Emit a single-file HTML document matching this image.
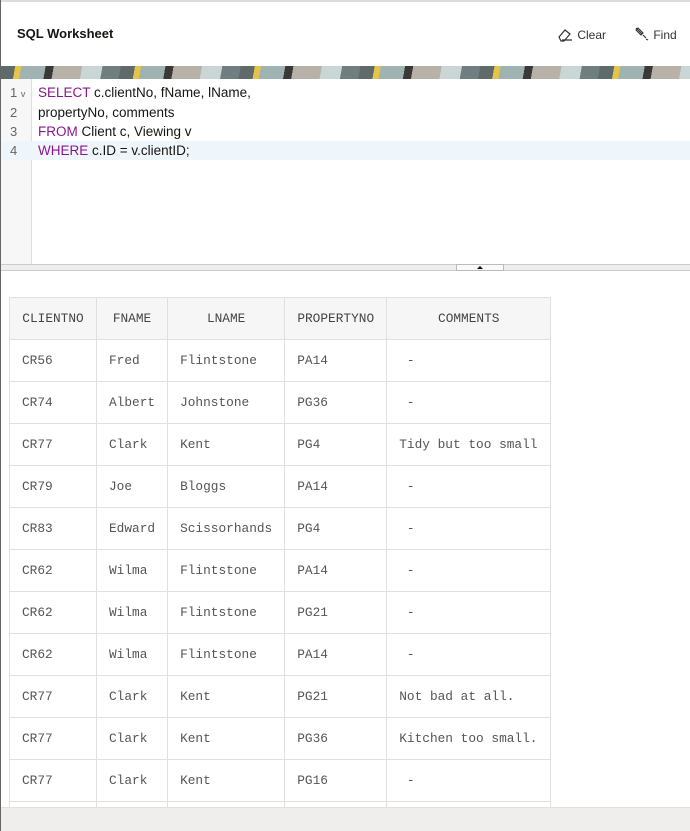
<!DOCTYPE html>
<html style="overflow:hidden;height:831px"><head><style>
*{margin:0;padding:0;box-sizing:border-box}
body{width:690px;height:831px;overflow:hidden;background:#fff;position:relative;font-family:"Liberation Sans",sans-serif}
.wrap{position:absolute;left:0;top:0;width:690px;height:831px;overflow:hidden}
.lb{position:absolute;left:0;top:0;width:1px;height:831px;background:#666}
.tb{position:absolute;left:0;top:0;width:690px;height:2px;background:#ddd}
.title{position:absolute;left:17px;top:26px;font-size:13px;font-weight:bold;color:#161513}
.btn{position:absolute;top:27px;font-size:12px;color:#333}
.banner{position:absolute;left:1px;top:66px;width:689px;height:13px;
background:repeating-linear-gradient(100deg,#5f6b6b 0 14px,#e8c34a 14px 20px,#9fb3b3 20px 44px,#3b3937 44px 52px,#b7b1a8 52px 80px,#c9d6d6 80px 100px,#6f7f7f 100px 118px)}
.gut{position:absolute;left:1px;top:79px;width:31px;height:185px;background:#f7f7f7;border-right:1px solid #ddd}
.hl{position:absolute;left:1px;top:141px;width:689px;height:19px;background:#eef6fc}
.ln{position:absolute;left:10px;font-size:13px;color:#666}
.code{position:absolute;left:38px;font-size:13.5px;color:#161513}
.k{color:#8b168b}
.split{position:absolute;left:1px;top:264px;width:689px;height:7px;background:#eee;border-top:1px solid #ccc;border-bottom:1px solid #ccc}
.handle{position:absolute;left:456px;top:264px;width:48px;height:7px;background:#fafafa;border:1px solid #bbb}
table{position:absolute;left:9px;top:297px;border-collapse:collapse;font-family:"Liberation Mono",monospace;font-size:12.8px;color:#555}
td,th{border:1px solid #e0e0e0;height:42px;padding:0 12px;text-align:left;font-weight:normal;white-space:nowrap}
th{background:#f6f6f6;color:#444;text-align:center}
.bot{position:absolute;left:1px;top:807px;width:689px;height:24px;background:#efeeec;border-top:1px solid #e0e0e0}
</style></head><body><div class="wrap">
<div class="tb"></div>
<div class="title">SQL Worksheet</div>
<div class="btn" style="left:557px"><svg width="17" height="15" viewBox="0 0 17 15" style="vertical-align:-3px"><path d="M2 10l6-7 5 4-6 7H4z M5 13h10" fill="none" stroke="#333" stroke-width="1.2"/></svg> Clear</div>
<div class="btn" style="left:634px"><svg width="16" height="15" viewBox="0 0 16 15" style="vertical-align:-3px"><path d="M2 1l6 6M4 1l5 5-2 2-5-5z M9 8l3 3 M12 12l2 1" fill="none" stroke="#333" stroke-width="1.1"/></svg> Find</div>
<div class="banner"></div>
<div class="gut"></div>
<div class="hl"></div>
<div class="ln" style="top:85px">1 <span style="font-size:9px">v</span></div>
<div class="ln" style="top:105px">2</div>
<div class="ln" style="top:124px">3</div>
<div class="ln" style="top:143px">4</div>
<div class="code" style="top:85px"><span class="k">SELECT</span> c.clientNo, fName, lName,</div>
<div class="code" style="top:105px">propertyNo, comments</div>
<div class="code" style="top:124px"><span class="k">FROM</span> Client c, Viewing v</div>
<div class="code" style="top:143px"><span class="k">WHERE</span> c.ID = v.clientID;</div>
<div class="split"></div>
<div class="handle"><svg width="46" height="5" style="position:absolute;left:0;top:0"><path d="M20 4h6l-3-3z" fill="#000"/></svg></div>
<table>
<tr><th style="width:87px">CLIENTNO</th><th style="width:71px">FNAME</th><th style="width:117px">LNAME</th><th style="width:102px">PROPERTYNO</th><th style="width:164px">COMMENTS</th></tr>
<tr><td>CR56</td><td>Fred</td><td>Flintstone</td><td>PA14</td><td>&nbsp;-</td></tr>
<tr><td>CR74</td><td>Albert</td><td>Johnstone</td><td>PG36</td><td>&nbsp;-</td></tr>
<tr><td>CR77</td><td>Clark</td><td>Kent</td><td>PG4</td><td>Tidy but too small</td></tr>
<tr><td>CR79</td><td>Joe</td><td>Bloggs</td><td>PA14</td><td>&nbsp;-</td></tr>
<tr><td>CR83</td><td>Edward</td><td>Scissorhands</td><td>PG4</td><td>&nbsp;-</td></tr>
<tr><td>CR62</td><td>Wilma</td><td>Flintstone</td><td>PA14</td><td>&nbsp;-</td></tr>
<tr><td>CR62</td><td>Wilma</td><td>Flintstone</td><td>PG21</td><td>&nbsp;-</td></tr>
<tr><td>CR62</td><td>Wilma</td><td>Flintstone</td><td>PA14</td><td>&nbsp;-</td></tr>
<tr><td>CR77</td><td>Clark</td><td>Kent</td><td>PG21</td><td>Not bad at all.</td></tr>
<tr><td>CR77</td><td>Clark</td><td>Kent</td><td>PG36</td><td>Kitchen too small.</td></tr>
<tr><td>CR77</td><td>Clark</td><td>Kent</td><td>PG16</td><td>&nbsp;-</td></tr>
<tr><td style="height:8px"></td><td style="height:8px"></td><td style="height:8px"></td><td style="height:8px"></td><td style="height:8px"></td></tr>
</table>
<div class="bot"></div>
<div class="lb"></div>
</div></body></html>
